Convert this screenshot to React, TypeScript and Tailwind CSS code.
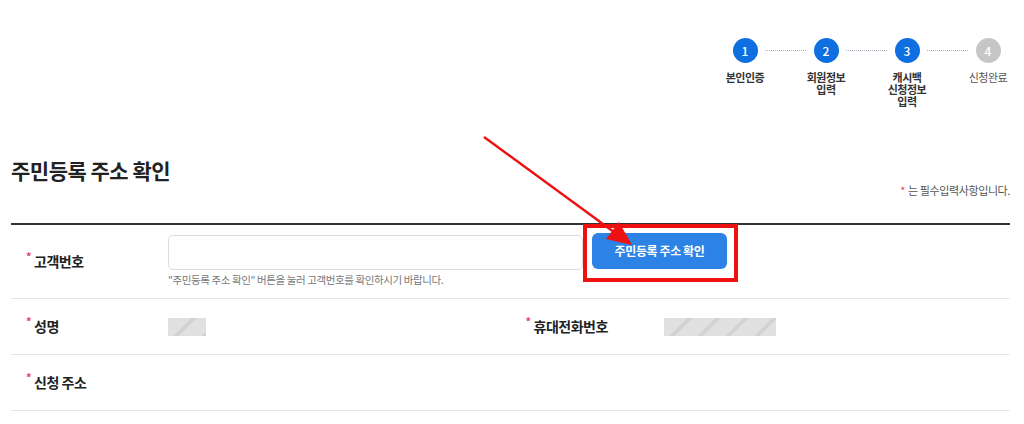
import React from "react";

const steps = [
  { n: "1", label: ["본인인증"], active: true },
  { n: "2", label: ["회원정보", "입력"], active: true },
  { n: "3", label: ["캐시백", "신청정보", "입력"], active: true },
  { n: "4", label: ["신청완료"], active: false },
];

function Req() {
  return <span className="text-[#e2436a] text-[11px] leading-none mr-[3px] relative top-[-5px]">*</span>;
}

function Blur({ w }: { w: number }) {
  return (
    <div
      className="h-[18px] bg-[repeating-linear-gradient(135deg,#e0e0e0_0px,#e0e0e0_16px,#d2d2d2_17px,#d2d2d2_20px)]"
      style={{ width: w }}
    />
  );
}

export default function App() {
  return (
    <div
      className="relative w-[1024px] h-[424px] bg-white overflow-hidden text-[#222]"
      style={{ fontFamily: '"Noto Sans CJK KR", "Noto Sans", sans-serif' }}
    >
      {/* stepper */}
      <div className="flex justify-end pt-[38px] pr-[16px]">
        {steps.map((s, i) => (
          <React.Fragment key={s.n}>
            {i > 0 && (
              <div className="w-[41px] h-[25px] flex items-center">
                <div className="w-full border-t border-dotted border-[#aab4c0]" />
              </div>
            )}
            <div className="w-[40px] flex flex-col items-center">
              <div
                className={`w-[25px] h-[25px] rounded-full flex items-center justify-center text-white text-[12px] font-medium leading-none ${
                  s.active ? "bg-[#0f6ee0]" : "bg-[#c6c6c6]"
                }`}
              >
                {s.n}
              </div>
              <div
                className={`mt-[8px] text-[11px] text-center whitespace-nowrap tracking-[-0.5px] ${
                  s.active ? "font-bold text-[#333]" : "text-[#555]"
                }`}
              >
                {s.label.map((l) => (
                  <div key={l} className="h-[12px] leading-[12px]">
                    {l}
                  </div>
                ))}
              </div>
            </div>
          </React.Fragment>
        ))}
      </div>

      <div className="pl-[11px] pr-[14px]">
        <div className="mt-[51px] h-[24px] leading-[24px] text-[21px] font-bold tracking-[-0.5px] text-[#222]">
          주민등록 주소 확인
        </div>
        <div className="mt-[1px] flex justify-end items-center h-[14px] text-[11px] text-[#555] tracking-[-0.4px]">
          <span className="text-[#e2436a] mr-[3px]">*</span>는 필수입력사항입니다.
        </div>
        <div className="mt-[26px] h-[2px] bg-[#333]" />

        {/* row 1 */}
        <div className="flex h-[74px] border-b border-[#e6e6e6]">
          <div className="w-[157px] pl-[15px] flex items-center text-[14px] font-bold tracking-[-0.5px]">
            <Req />
            고객번호
          </div>
          <div className="pt-[10px]">
            <div className="flex items-start">
              <div className="w-[415px] h-[35px] rounded-[5px] border border-[#dcdcdc] bg-white" />
              <div className="relative ml-[9px] mt-[-2px]">
                <button className="w-[135px] h-[36px] rounded-[6px] bg-[#2d82e5] text-white text-[12px] font-bold tracking-[-0.4px]">
                  주민등록 주소 확인
                </button>
                <div className="absolute left-[-9px] top-[-9px] w-[155px] h-[58px] border-[4px] border-[#ee1111] pointer-events-none" />
              </div>
            </div>
            <div className="mt-[4px] text-[10.5px] leading-[12px] text-[#777] tracking-[-0.4px]">
              "주민등록 주소 확인" 버튼을 눌러 고객번호를 확인하시기 바랍니다.
            </div>
          </div>
        </div>

        {/* row 2 */}
        <div className="flex h-[56px] border-b border-[#e6e6e6]">
          <div className="w-1/2 flex items-center">
            <div className="w-[157px] pl-[15px] flex items-center text-[14px] font-bold tracking-[-0.5px]">
              <Req />
              성명
            </div>
            <Blur w={38} />
          </div>
          <div className="w-1/2 flex items-center">
            <div className="w-[153px] pl-[15px] flex items-center text-[14px] font-bold tracking-[-0.5px]">
              <Req />
              휴대전화번호
            </div>
            <Blur w={112} />
          </div>
        </div>

        {/* row 3 */}
        <div className="flex h-[56px] border-b border-[#e6e6e6]">
          <div className="w-[157px] pl-[15px] flex items-center text-[14px] font-bold tracking-[-0.5px]">
            <Req />
            신청 주소
          </div>
        </div>
      </div>

      {/* annotation arrow */}
      <svg className="absolute left-0 top-0 pointer-events-none" width="1024" height="424">
        <line x1="484" y1="137" x2="618" y2="235" stroke="#ee1111" strokeWidth="2.5" />
        <polygon points="632,245 606,239 619,222" fill="#ee1111" />
      </svg>
    </div>
  );
}
